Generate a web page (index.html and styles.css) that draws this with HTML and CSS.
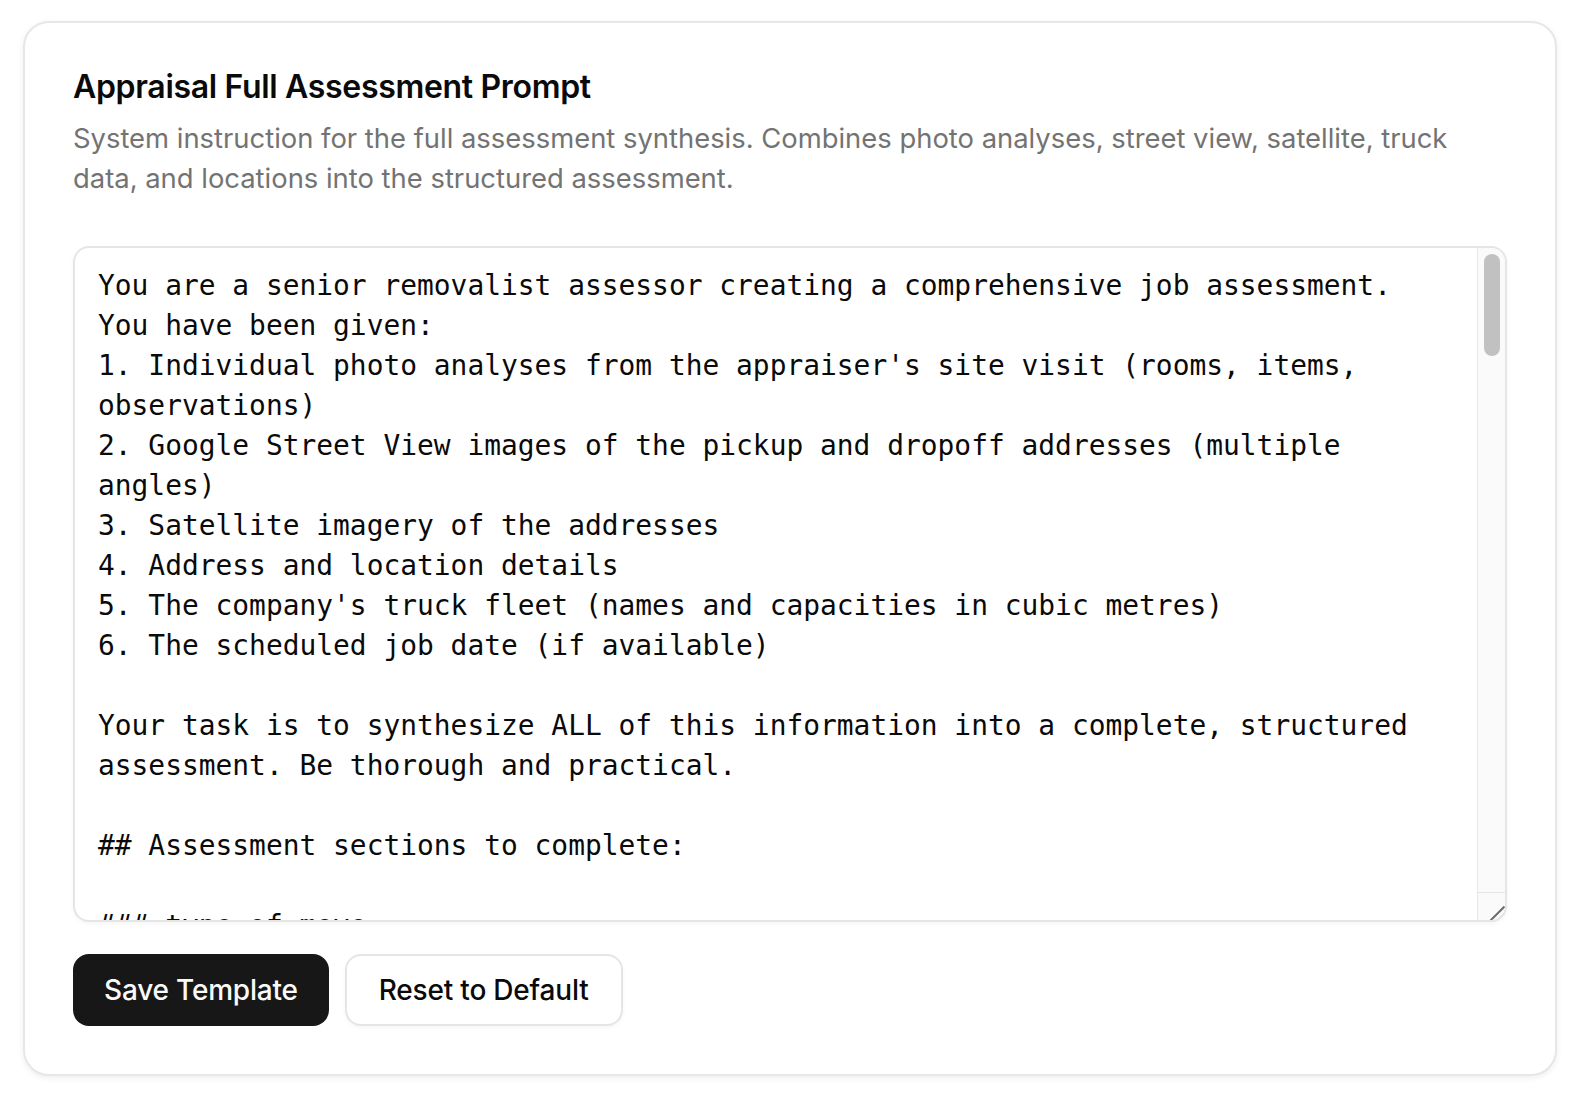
FILE: index.html
```html
<!DOCTYPE html>
<html lang="en">
<head>
<meta charset="utf-8">
<title>Prompt Templates</title>
<link rel="stylesheet" href="styles.css">
</head>
<body>
<main class="page">
  <section class="card">
    <h2 class="card-title">Appraisal Full Assessment Prompt</h2>
    <p class="card-desc">System instruction for the full assessment synthesis. Combines photo analyses, street view, satellite, truck data, and locations into the structured assessment.</p>
    <div class="editor">
      <textarea class="prompt-editor" spellcheck="false" aria-label="Prompt template">You are a senior removalist assessor creating a comprehensive job assessment.
You have been given:
1. Individual photo analyses from the appraiser's site visit (rooms, items, observations)
2. Google Street View images of the pickup and dropoff addresses (multiple angles)
3. Satellite imagery of the addresses
4. Address and location details
5. The company's truck fleet (names and capacities in cubic metres)
6. The scheduled job date (if available)

Your task is to synthesize ALL of this information into a complete, structured assessment. Be thorough and practical.

## Assessment sections to complete:

### type of move
Classify the job as one of: residential, apartment, office, storage, interstate or small move.
Give a one-line reason based on the photos and addresses.

### property details
For both pickup and dropoff, describe:
- Property type (house, unit, townhouse, commercial)
- Number of levels and which level the goods are on
- Approximate number of bedrooms / rooms to be moved

### access at pickup
- Stairs: count the flights and note if they are narrow, steep or winding
- Lifts: note whether a lift is available and whether it needs to be booked
- Doorways and hallways: flag anything tight for large furniture
- Distance from the front door to where the truck can park

### access at dropoff
Use the same checklist as the pickup. If Street View shows a driveway, slope, gate or loading dock, say so. If access cannot be confirmed from the imagery, write "unconfirmed" rather than guessing.

### parking and loading
- Where the truck can legally park (driveway, street, loading zone)
- Clearways, narrow streets, overhanging trees or low wires visible in Street View
- Whether a council parking permit is likely to be needed

### inventory summary
Group items by room. For each room list the main items with a quantity. Merge duplicates seen across several photos - do not count the same item twice.

### heavy and specialty items
List anything needing extra care or equipment: pianos, safes, pool tables, gym equipment, large TVs, glass tables, antiques, artwork, fridges with plumbed water.

### packing requirements
Estimate the number of cartons needed (small, medium, large, book, wardrobe) and whether the customer appears to have started packing.

### volume estimate
Give the total estimated volume in cubic metres, plus a low and high range.
Show the main contributors to the total.

### truck recommendation
Pick the most suitable truck from the company's fleet by name. If the volume exceeds the largest truck, recommend a combination of trucks or the number of trips.

### crew size
Recommend the number of movers and explain the reasoning (stairs, heavy items, distance).

### time estimate
Estimate loading time, travel time between addresses and unloading time in hours.
If the job date is known, mention any weekday or weekend traffic considerations.

### risks and hazards
Flag anything that could cause delays, damage or injury on the day.

### notes for the crew
Short, practical notes the team leader should read before arriving on site.

## Output rules:
- Use the exact section headings above.
- Be specific: use numbers wherever you can.
- If information is missing, state what is missing instead of inventing it.
- Do not repeat the raw photo analyses; summarise them.
- Keep the tone professional and concise.</textarea>
      <div class="scrollbar" aria-hidden="true">
        <div class="scrollbar-track">
          <div class="scrollbar-thumb"></div>
        </div>
        <div class="scrollbar-corner">
          <svg class="grip" width="28" height="28" viewBox="0 0 28 28">
            <line x1="13.5" y1="28.5" x2="27.5" y2="14.5"></line>
            <line x1="21" y1="28.5" x2="28" y2="21.5"></line>
          </svg>
        </div>
      </div>
    </div>
    <div class="actions">
      <button type="button" class="btn btn-primary">Save Template</button>
      <button type="button" class="btn btn-outline">Reset to Default</button>
    </div>
  </section>
</main>
</body>
</html>
```

FILE: styles.css
```css
* {
  box-sizing: border-box;
}

html,
body {
  margin: 0;
  background: #ffffff;
}

body {
  font-family: Inter, "Noto Sans", sans-serif;
  color: #0a0a0a;
}

.page {
  padding: 21px 31px 24px 23px;
}

/* Settings card */
.card {
  display: flex;
  flex-direction: column;
  padding: 48px;
  background: #ffffff;
  border: 2px solid #e7e7e7;
  border-radius: 26px;
  box-shadow: 0 2px 6px rgba(0, 0, 0, 0.07);
}

.card-title {
  margin: 0;
  font-size: 32px;
  line-height: 32px;
  font-weight: 600;
  letter-spacing: -0.01em;
}

.card-desc {
  margin: 15px 0 0;
  font-size: 27.4px;
  line-height: 40px;
  color: #737373;
}

/* Prompt editor with its scrollbar drawn on top */
.editor {
  position: relative;
  height: 676px;
  margin-top: 48px;
}

.prompt-editor {
  display: block;
  width: 100%;
  height: 100%;
  padding: 18px 52px 16px 23px;
  border: 2px solid #e5e5e5;
  border-radius: 16px;
  background: #ffffff;
  box-shadow: 0 2px 4px rgba(0, 0, 0, 0.04);
  font-family: "DejaVu Sans Mono", monospace;
  font-size: 27.9px;
  line-height: 40px;
  color: #0a0a0a;
  resize: none;
  overflow-y: hidden;
  outline: none;
}

.scrollbar {
  position: absolute;
  top: 2px;
  right: 2px;
  bottom: 2px;
  width: 28px;
  display: flex;
  flex-direction: column;
  overflow: hidden;
  border-top-right-radius: 14px;
  border-bottom-right-radius: 14px;
}

.scrollbar-track {
  flex: 1;
  padding: 6px 5px 0 6px;
  background: #fafafa;
  border-left: 1px solid #e8e8e8;
}

.scrollbar-thumb {
  height: 102px;
  border-radius: 8px;
  background: #c1c1c1;
}

.scrollbar-corner {
  height: 28px;
  flex: none;
  background: #fafafa;
  border-top: 1px solid #e6e6e6;
  border-left: 1px solid #e6e6e6;
}

.grip {
  display: block;
  margin: -1px 0 0 -1px;
  stroke: #6b6b6b;
  stroke-width: 2;
}

/* Action buttons */
.actions {
  display: flex;
  gap: 16px;
  margin-top: 32px;
}

.btn {
  height: 72px;
  padding: 0 32px;
  border: 0;
  border-radius: 16px;
  font-family: Inter, "Noto Sans", sans-serif;
  font-size: 28px;
  font-weight: 500;
  line-height: 1;
  letter-spacing: -0.2px;
  cursor: pointer;
}

.btn-primary {
  padding: 0 31px;
  background: #171717;
  color: #fafafa;
}

.btn-outline {
  background: #ffffff;
  border: 2px solid #e5e5e5;
  color: #0a0a0a;
  box-shadow: 0 2px 4px rgba(0, 0, 0, 0.04);
}
```
